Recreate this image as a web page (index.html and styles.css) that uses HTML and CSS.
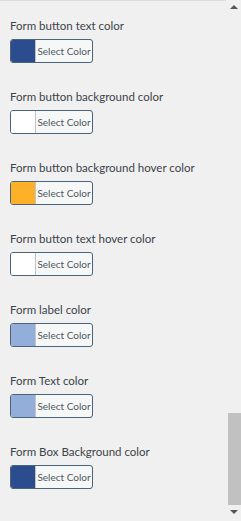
FILE: index.html
```html
<!DOCTYPE html>
<html lang="en">

<head>
    <meta charset="UTF-8">
    <title>Form colors</title>
    <link rel="stylesheet" href="styles.css">
</head>

<body>
    <div class="panel">
        <div class="settings">
            <div class="field">
                <label>Form button text color</label>
                <button class="color-result"><span class="swatch dark-blue"></span><span class="pick">Select Color</span></button>
            </div>
            <div class="field">
                <label>Form button background color</label>
                <button class="color-result"><span class="swatch white"></span><span class="pick">Select Color</span></button>
            </div>
            <div class="field">
                <label>Form button background hover color</label>
                <button class="color-result"><span class="swatch orange"></span><span class="pick">Select Color</span></button>
            </div>
            <div class="field">
                <label>Form button text hover color</label>
                <button class="color-result"><span class="swatch white"></span><span class="pick">Select Color</span></button>
            </div>
            <div class="field">
                <label>Form label color</label>
                <button class="color-result"><span class="swatch light-blue"></span><span class="pick">Select Color</span></button>
            </div>
            <div class="field">
                <label>Form Text color</label>
                <button class="color-result"><span class="swatch light-blue"></span><span class="pick">Select Color</span></button>
            </div>
            <div class="field">
                <label>Form Box Background color</label>
                <button class="color-result"><span class="swatch dark-blue"></span><span class="pick">Select Color</span></button>
            </div>
        </div>

        <div class="scrollbar">
            <span class="arrow up"></span>
            <span class="track"></span>
            <span class="thumb"></span>
            <span class="arrow down"></span>
        </div>
    </div>
</body>

</html>
```

FILE: styles.css
```css
html,
body {
    margin: 0;
    background: #f0f0f0;
}

body {
    font-family: Lato, "Open Sans", "Liberation Sans", sans-serif;
    color: #3c434a;
}

.panel {
    display: flex;
    height: 521px;
    overflow: hidden;
}

.settings {
    flex: 1;
    padding: 17px 0 0 10px;
    border-top: 1px solid #dcdcdc;
}

.field {
    display: flex;
    flex-direction: column;
    align-items: flex-start;
    margin-bottom: 26px;
}

.field label {
    font-size: 11.5px;
    line-height: 16px;
    margin-bottom: 5px;
}

.color-result {
    display: flex;
    height: 24px;
    padding: 0;
    border: 1px solid #4c6479;
    border-radius: 3px;
    background: #f6f7f7;
    overflow: hidden;
    font-family: inherit;
}

.swatch {
    width: 24px;
    border-right: 1px solid #c3c4c7;
}

.pick {
    width: 56px;
    font-size: 10px;
    line-height: 22px;
    color: #50575e;
    text-align: center;
}

.dark-blue {
    background: #2b4c8d;
}

.white {
    background: #ffffff;
}

.orange {
    background: #fdb128;
}

.light-blue {
    background: #93afd9;
}

/* fake scrollbar */
.scrollbar {
    width: 15px;
    display: flex;
    flex-direction: column;
    align-items: center;
    background: #f0f0f0;
}

.arrow {
    width: 0;
    height: 0;
    border-left: 4px solid transparent;
    border-right: 4px solid transparent;
}

.arrow.up {
    margin: 5px 0 0;
    border-bottom: 4px solid #555;
}

.arrow.down {
    margin: 5px 0 7px;
    border-top: 4px solid #555;
}

.track {
    flex: 1;
}

.thumb {
    width: 13px;
    height: 92px;
    margin-left: 1px;
    background: #c1c1c1;
}
```
